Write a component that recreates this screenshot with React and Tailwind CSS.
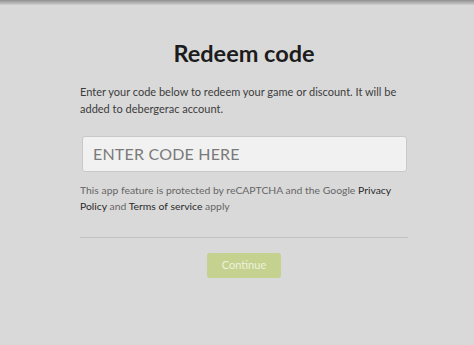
export default function App() {
  return (
    <div className="w-[474px] h-[345px] bg-[#d9d9d9] font-['Lato','Open_Sans',sans-serif] overflow-hidden flex flex-col">
      {/* top shadow band */}
      <div className="h-[5px] bg-gradient-to-b from-[#8f8f8f] to-[#d0d0d0]"></div>

      <div className="flex flex-col w-[328px] ml-[80px] pt-[33px]">
        <h1 className="text-center text-[23.5px] font-bold text-[#1c1c1c] leading-[30px]">Redeem code</h1>

        <p className="mt-[15px] text-[11px] leading-[17px] text-[#3c3c3c]">
          Enter your code below to redeem your game or discount. It will be added to debergerac account.
        </p>

        <div className="mt-[19px] ml-[2px] w-[325px] h-[36px] bg-[#f1f1f1] border border-[#c8c8c8] rounded-[3px] flex items-center px-[10px]">
          <span className="text-[16px] text-[#7a7a7a] tracking-[0.2px]">ENTER CODE HERE</span>
        </div>

        <p className="mt-[10px] text-[10.4px] leading-[16px] text-[#666666]">
          This app feature is protected by reCAPTCHA and the Google{' '}
          <span className="text-[#2a2a2a]">Privacy Policy</span> and{' '}
          <span className="text-[#2a2a2a]">Terms of service</span> apply
        </p>

        <div className="mt-[23px] w-[328px] h-[1px] bg-[#c2c2c2]"></div>

        <div className="mt-[15px] flex justify-center">
          <div className="w-[74px] h-[25px] rounded-[3px] bg-[#c5d18f] flex items-center justify-center text-[11px] text-[#eef2dc]">
            Continue
          </div>
        </div>
      </div>
    </div>
  );
}
